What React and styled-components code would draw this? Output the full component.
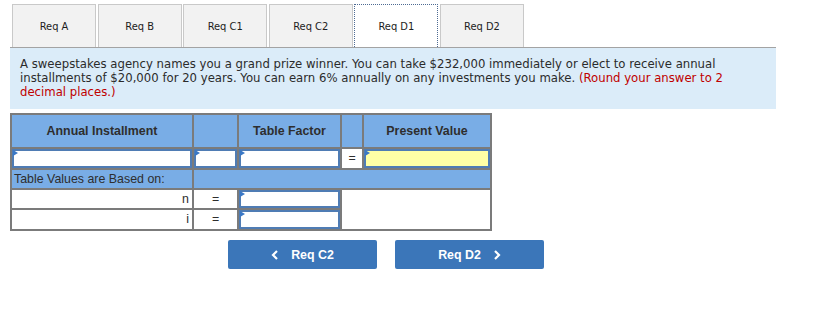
import React from 'react';
import styled, { createGlobalStyle } from 'styled-components';

const Global = createGlobalStyle`
  body {
    margin: 0;
    background: #fff;
    font-family: "DejaVu Sans", sans-serif;
  }
`;

const Page = styled.div`
  width: 827px;
  height: 332px;
  padding: 4px 0 0 10px;
  box-sizing: border-box;
`;

const TabBar = styled.div`
  display: flex;
  gap: 1.6px;
  width: 766px;
  padding-left: 2px;
  box-sizing: border-box;
  border-bottom: 1px solid #a3a3a3;
`;

const Tab = styled.button`
  width: 84px;
  height: 43px;
  box-sizing: border-box;
  padding: 0;
  border: 1px ${p => (p.$active ? 'dotted #4d6a92' : 'solid #c9c9c9')};
  border-bottom: none;
  background: ${p => (p.$active ? '#fff' : '#f2f2f2')};
  font-family: "DejaVu Sans Condensed", "DejaVu Sans", sans-serif;
  font-size: 11px;
  color: #1d1d1d;
  cursor: pointer;
`;

const Prompt = styled.div`
  width: 766px;
  box-sizing: border-box;
  background: #dbecf9;
  padding: 9px 10px 10px;
  font-family: "DejaVu Sans", sans-serif;
  font-size: 11.7px;
  line-height: 14px;
  color: #2b2b2b;
  white-space: nowrap;
`;

const Note = styled.span`
  color: #c00000;
`;

const Grid = styled.table`
  margin-top: 4px;
  border-collapse: collapse;
  width: 480px;
  font-family: "Liberation Sans", Arial, sans-serif;
  font-size: 12.4px;
  color: #2e2e2e;
  table-layout: fixed;
`;

const Cell = styled.td`
  border: 2px solid #7b7b7b;
  padding: ${p => (p.$pad ? '0 3px 0 2px' : '0')};
  height: ${p => p.$h || 16}px;
  background: ${p => (p.$blue ? '#79ade6' : '#fff')};
  text-align: ${p => p.$align || 'center'};
  font-weight: ${p => (p.$bold ? 'bold' : 'normal')};
  vertical-align: middle;
  white-space: nowrap;
  line-height: 15px;
`;

const Field = styled.div`
  position: relative;
  height: ${p => p.$h || 19}px;
  border: 2px solid #4f7cb4;
  box-sizing: border-box;
  background: ${p => (p.$yellow ? '#ffffa6' : '#fff')};
  &::before {
    content: '';
    position: absolute;
    left: -1px;
    top: -1px;
    border-left: 5px solid #3a78c6;
    border-top: 3px solid transparent;
    border-bottom: 3px solid transparent;
  }
`;

const Nav = styled.div`
  display: flex;
  gap: 18px;
  margin-top: 9px;
  padding-left: 218px;
`;

const NavButton = styled.button`
  width: 149px;
  height: 29px;
  border: none;
  border-radius: 2px;
  background: #3b76b9;
  color: #fff;
  font-family: "Liberation Sans", Arial, sans-serif;
  font-weight: bold;
  font-size: 12.4px;
  display: flex;
  align-items: center;
  justify-content: center;
  gap: 12px;
  cursor: pointer;
`;

const Chevron = ({ dir }) => (
  <svg width="8" height="10" viewBox="0 0 8 10">
    <path
      d={dir === 'left' ? 'M6 1 L2 5 L6 9' : 'M2 1 L6 5 L2 9'}
      fill="none"
      stroke="#fff"
      strokeWidth="2.2"
    />
  </svg>
);

const tabs = ['Req A', 'Req B', 'Req C1', 'Req C2', 'Req D1', 'Req D2'];

export default function App() {
  return (
    <Page>
      <Global />
      <TabBar>
        {tabs.map(t => (
          <Tab key={t} $active={t === 'Req D1'}>{t}</Tab>
        ))}
      </TabBar>
      <Prompt>
        A sweepstakes agency names you a grand prize winner. You can take $232,000 immediately or elect to receive annual
        <br />
        installments of $20,000 for 20 years. You can earn 6% annually on any investments you make.{' '}
        <Note>(Round your answer to 2</Note>
        <br />
        <Note>decimal places.)</Note>
      </Prompt>
      <Grid>
        <colgroup>
          <col style={{ width: 182 }} />
          <col style={{ width: 45 }} />
          <col style={{ width: 103 }} />
          <col style={{ width: 22 }} />
          <col style={{ width: 128 }} />
        </colgroup>
        <tbody>
          <tr>
            <Cell $blue $bold $h={32}>Annual Installment</Cell>
            <Cell $blue />
            <Cell $blue $bold>Table Factor</Cell>
            <Cell $blue />
            <Cell $blue $bold>Present Value</Cell>
          </tr>
          <tr>
            <Cell><Field /></Cell>
            <Cell><Field /></Cell>
            <Cell><Field /></Cell>
            <Cell>=</Cell>
            <Cell><Field $yellow /></Cell>
          </tr>
          <tr>
            <Cell $blue $align="left" $pad $h={18}>Table Values are Based on:</Cell>
            <Cell $blue colSpan={4} />
          </tr>
          <tr>
            <Cell $align="right" $pad>n</Cell>
            <Cell>=</Cell>
            <Cell><Field $h={18} /></Cell>
            <Cell colSpan={2} rowSpan={2} />
          </tr>
          <tr>
            <Cell $align="right" $pad>i</Cell>
            <Cell>=</Cell>
            <Cell><Field $h={19} /></Cell>
          </tr>
        </tbody>
      </Grid>
      <Nav>
        <NavButton><Chevron dir="left" />Req C2</NavButton>
        <NavButton>Req D2<Chevron dir="right" /></NavButton>
      </Nav>
    </Page>
  );
}
